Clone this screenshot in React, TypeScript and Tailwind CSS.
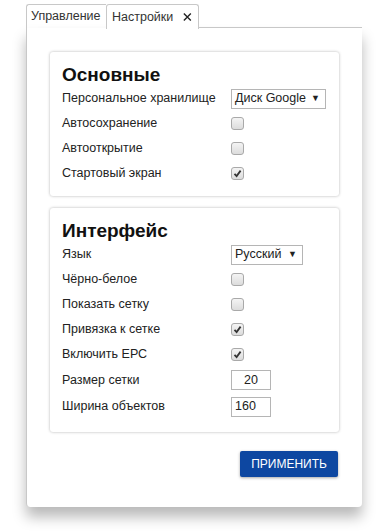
import React from "react";

const font = { fontFamily: '"Liberation Sans", Arial, sans-serif' };

function Check({ checked }: { checked?: boolean }) {
  return (
    <span className="flex h-[13px] w-[13px] items-center justify-center rounded-[3px] border border-[#a9a9a9] bg-gradient-to-b from-[#f4f4f4] to-[#dcdcdc]">
      {checked && (
        <svg width="9" height="9" viewBox="0 0 9 9">
          <path d="M1.5 4.8 L3.6 7 L7.6 1.6" fill="none" stroke="#333" strokeWidth="1.8" />
        </svg>
      )}
    </span>
  );
}

function Row({ label, children }: { label: string; children?: React.ReactNode }) {
  return (
    <div className="flex h-[25px] items-center">
      <span className="w-[169px] shrink-0">{label}</span>
      {children}
    </div>
  );
}

function Select({ value, w }: { value: string; w: string }) {
  return (
    <span className={`flex h-[20px] items-center justify-between border border-[#b5b5b5] pl-[3px] pr-[5px] ${w}`}>
      <span>{value}</span>
      <span className="text-[9px]">▼</span>
    </span>
  );
}

function Num({ value, center }: { value: string; center?: boolean }) {
  return (
    <span className={`flex h-[20px] w-[40px] items-center border border-[#b5b5b5] px-[3px] ${center ? "justify-center" : ""}`}>
      {value}
    </span>
  );
}

export default function App() {
  return (
    <div className="h-[531px] w-[389px] bg-white pt-[4px] text-[12.5px] text-[#222]" style={font}>
      <div className="ml-[26px] w-[336px]">
        <div className="flex h-[24px] items-end">
          <div className="flex h-[24px] w-[80px] items-center rounded-tl-[3px] border-l border-t border-[#c8c8c8] px-[4px] text-[#333]">
            Управление
          </div>
          <div className="relative z-10 -mb-px flex h-[25px] w-[93px] items-center gap-[10px] rounded-t-[3px] border border-b-0 border-[#c8c8c8] bg-white pl-[5px] pr-[6px] text-[#333]">
            Настройки
            <svg width="10" height="10" viewBox="0 0 10 10">
              <path d="M1 1 L9 9 M9 1 L1 9" stroke="#222" strokeWidth="1.6" />
            </svg>
          </div>
          <div className="flex-1 border-b border-[#c8c8c8]" />
        </div>
        <div className="rounded-b-[4px] border-l border-[#c8c8c8] bg-white px-[23px] pb-[30px] pt-[24px] shadow-[0_10px_14px_rgba(0,0,0,0.28)]">
          <div className="rounded-[3px] bg-white px-[12px] pb-[10px] pt-[12px] shadow-[0_0_3px_rgba(0,0,0,0.3)]">
            <div className="text-[19px] font-bold leading-[22px] text-[#111]">Основные</div>
            <Row label="Персональное хранилище">
              <Select value="Диск Google" w="w-[95px]" />
            </Row>
            <Row label="Автосохранение">
              <Check />
            </Row>
            <Row label="Автооткрытие">
              <Check />
            </Row>
            <Row label="Стартовый экран">
              <Check checked />
            </Row>
          </div>
          <div className="mt-[12px] rounded-[3px] bg-white px-[12px] pb-[12px] pt-[12px] shadow-[0_0_3px_rgba(0,0,0,0.3)]">
            <div className="text-[19px] font-bold leading-[22px] text-[#111]">Интерфейс</div>
            <Row label="Язык">
              <Select value="Русский" w="w-[72px]" />
            </Row>
            <Row label="Чёрно-белое">
              <Check />
            </Row>
            <Row label="Показать сетку">
              <Check />
            </Row>
            <Row label="Привязка к сетке">
              <Check checked />
            </Row>
            <Row label="Включить ЕРС">
              <Check checked />
            </Row>
            <div className="flex h-[26px] items-center">
              <span className="w-[169px] shrink-0">Размер сетки</span>
              <Num value="20" center />
            </div>
            <div className="flex h-[27px] items-center">
              <span className="w-[169px] shrink-0">Ширина объектов</span>
              <Num value="160" />
            </div>
          </div>
          <div className="mt-[19px] flex justify-end pr-[1px]">
            <button className="h-[26px] w-[98px] rounded-[2px] bg-[#0d47a1] text-[12px] text-white shadow-[0_1px_3px_rgba(0,0,0,0.35)]">
              ПРИМЕНИТЬ
            </button>
          </div>
        </div>
      </div>
    </div>
  );
}
